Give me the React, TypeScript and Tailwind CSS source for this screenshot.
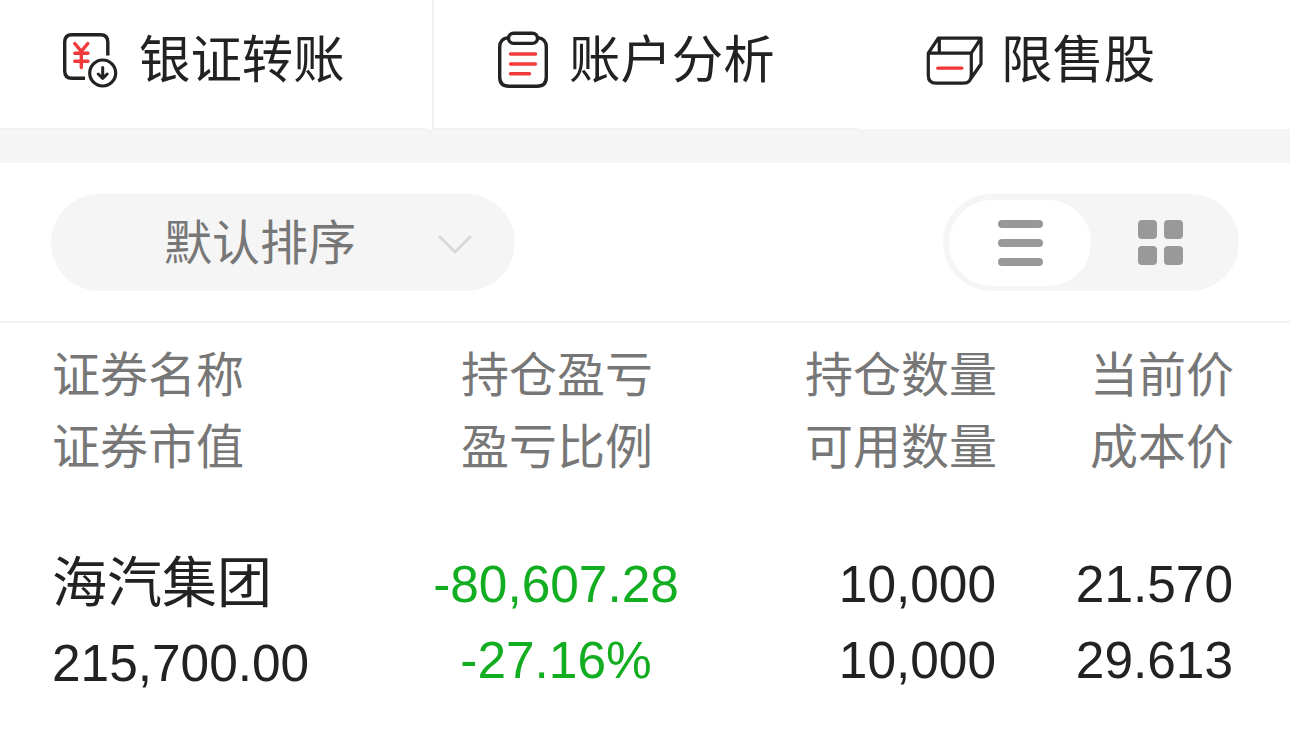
import React from "react";

const font = "font-['Liberation_Sans','Noto_Sans_CJK_SC',sans-serif]";

function TransferIcon() {
  return (
    <svg width="56" height="56" viewBox="0 0 56 56" fill="none" stroke="#222" strokeWidth="3.400" className="shrink-0">
      <path d="M23 46.300H10Q2.700 46.300 2.700 39V10Q2.700 2.700 10 2.700H38.500Q45.800 2.700 45.800 10V23.500" />
      <g stroke="#f23a3a" strokeLinecap="round" strokeLinejoin="round"><path d="M12.800 11.500L19.300 19.300L25.800 11.500M12.800 21.300H26M12.800 29.300H26M19.300 19.500V35.500" /></g>
      <circle cx="40.700" cy="41" r="13" strokeWidth="3.200" />
      <path d="M40.700 35.500v10M36.200 42l4.500 4.300L45.200 42" strokeLinecap="round" strokeLinejoin="round" strokeWidth="3" />
    </svg>
  );
}

function AnalysisIcon() {
  return (
    <svg width="52" height="58" viewBox="0 0 52 58" fill="none" stroke="#222" strokeWidth="3.400" className="shrink-0">
      <path d="M11.500 6.600Q2.700 7.500 2.700 16V46Q2.700 55.300 12 55.300H40Q49.300 55.300 49.300 46V16Q49.300 7.500 40.500 6.600" />
      <rect x="11.500" y="2.200" width="29" height="10.200" rx="5.100" />
      <path d="M13.500 23h25M13.500 33h25M13.500 42.700h19" stroke="#f23a3a" strokeLinecap="round" />
    </svg>
  );
}

function BoxIcon() {
  return (
    <svg width="58" height="50" viewBox="0 0 58 50" fill="none" stroke="#222" strokeWidth="3.200" strokeLinejoin="round" className="shrink-0">
      <path d="M3.300 17.200H46.300V38.500Q46.300 47.200 38.500 47.200H11Q3.300 47.200 3.300 39.500V17.200L13.300 2.200H56V28L44.500 44.500M46.300 17.200L56 2.200M14.300 2.200V17" />
      <path d="M12.800 32.200h24" stroke="#f03535" strokeLinecap="round" />
    </svg>
  );
}

export default function App() {
  return (
    <main className={`flex h-[736px] w-[1290px] flex-col overflow-hidden bg-white text-[#222] ${font}`}>
      <nav className="flex h-[129px] text-[51.400px] leading-[60px]">
        <div className="mr-[6px] flex w-[426px] border-b border-[#f0f0f0] pl-[62px] pt-[30px]">
          <div className="mt-[2px]"><TransferIcon /></div><span className="ml-[21px] whitespace-nowrap">银证转账</span>
        </div>
        <div className="flex w-[426px] border-b border-l-2 border-[#f0f0f0] pl-[63px] pt-[30px]">
          <div className="mt-[1px]"><AnalysisIcon /></div><span className="ml-[20px] whitespace-nowrap">账户分析</span>
        </div>
        <div className="flex flex-1 pl-[67px] pt-[30px]">
          <div className="mt-[6px]"><BoxIcon /></div><span className="ml-[18px]">限售股</span>
        </div>
      </nav>
      <div className="h-[34px] bg-[#f5f5f5]" />
      <section className="flex h-[160px] items-start justify-between border-b-2 border-[#f2f2f2] pl-[51px] pr-[51px] pt-[31px]">
        <div className="flex h-[97px] w-[464px] items-center rounded-full bg-[#f5f5f5] pl-[113px] text-[48px] text-[#777]">
          <span className="w-[192px] whitespace-nowrap pt-[3px]">默认排序</span>
          <svg width="36" height="24" viewBox="0 0 36 24" fill="none" stroke="#d8d8d8" strokeWidth="3" className="ml-[81px] mt-[4px]"><path d="M2 3l16 16L34 3" /></svg>
        </div>
        <div className="flex h-[97px] w-[296px] items-center rounded-full bg-[#f5f5f5] px-[6px]">
          <div className="flex h-[86px] w-[142px] items-center justify-center rounded-full bg-white">
            <div className="flex w-[45px] flex-col gap-[11px]"><i className="h-[8px] rounded-full bg-[#999]" /><i className="h-[8px] rounded-full bg-[#999]" /><i className="h-[8px] rounded-full bg-[#999]" /></div>
          </div>
          <div className="ml-[47px] grid grid-cols-2 gap-[7px]"><i className="size-[19px] rounded-[4px] bg-[#999]" /><i className="size-[19px] rounded-[4px] bg-[#999]" /><i className="size-[19px] rounded-[4px] bg-[#999]" /><i className="size-[19px] rounded-[4px] bg-[#999]" /></div>
        </div>
      </section>
      <section className="flex h-[190px] pt-[17px] text-[48px] leading-[72px] text-[#777]">
        <div className="w-[376px] pl-[52px]"><p>证券名称</p><p>证券市值</p></div>
        <div className="w-[362px] text-center"><p>持仓盈亏</p><p>盈亏比例</p></div>
        <div className="w-[259px] text-right"><p>持仓数量</p><p>可用数量</p></div>
        <div className="w-[237px] text-right"><p>当前价</p><p>成本价</p></div>
      </section>
      <section className="flex pt-[33px] text-[51.400px] leading-[76px]">
        <div className="w-[376px] pl-[52px]"><p className="text-[55px] leading-[75px]">海汽集团</p><p className="pt-[4px]">215,700.00</p></div>
        <div className="w-[360px] text-center text-[#12ad20]"><p>-80,607.28</p><p>-27.16%</p></div>
        <div className="w-[260px] text-right"><p>10,000</p><p>10,000</p></div>
        <div className="w-[237px] text-right"><p>21.570</p><p>29.613</p></div>
      </section>
    </main>
  );
}
